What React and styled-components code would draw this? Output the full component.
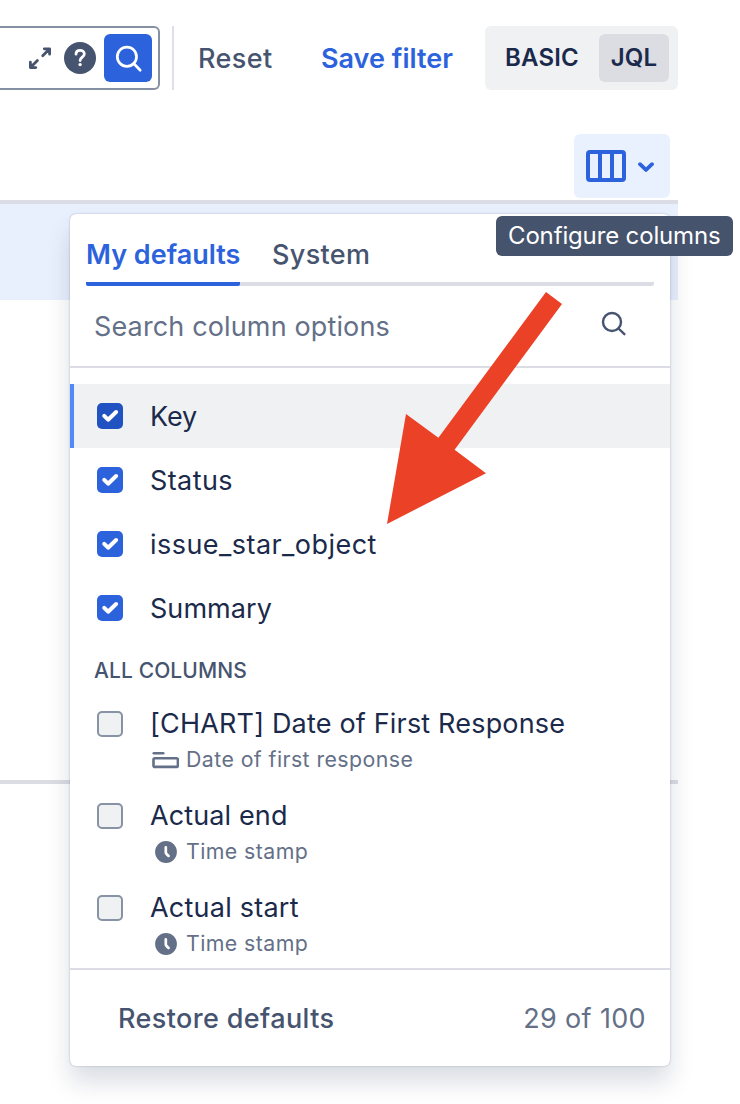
import React from "react";
import styled, { createGlobalStyle } from "styled-components";

const color = {
  text: "#1b2a4b",
  subtle: "#46546f",
  subtlest: "#647087",
  blue: "#2c63dc",
  blueDark: "#2152c1",
  line: "#dcdde4",
  grey: "#f0f1f3",
};

const Global = createGlobalStyle`
  * { box-sizing: border-box; }
  body {
    margin: 0;
    background: #fff;
    font-family: Inter, "Liberation Sans", sans-serif;
    color: ${color.text};
    overflow: hidden;
  }
`;

const Page = styled.main`
  position: relative;
  width: 740px;
  height: 1104px;
  padding-top: 26px;
  overflow: hidden;
`;

const Label = styled.span`
  font-size: ${(p) => p.$size || 27}px;
  font-weight: ${(p) => p.$weight || 430};
  letter-spacing: ${(p) => p.$track || 0}px;
  color: ${(p) => p.$color || color.text};
  line-height: 32px;
  white-space: nowrap;
`;

const Toolbar = styled.header`
  display: flex;
  align-items: center;
  height: 64px;
`;

const QueryBox = styled.div`
  display: flex;
  align-items: center;
  justify-content: flex-end;
  width: 160px;
  height: 64px;
  padding-right: 6px;
  border: 2px solid #8590a2;
  border-left: 0;
  border-radius: 0 6px 6px 0;
`;

const ExpandIcon = styled.svg`
  margin-right: 12px;
`;

const HelpIcon = styled.svg`
  margin-right: 8px;
`;

const SearchButton = styled.button`
  width: 48px;
  height: 48px;
  padding: 0;
  border: 0;
  border-radius: 6px;
  background: ${color.blue};
  svg { display: block; }
`;

const Divider = styled.div`
  width: 2px;
  height: 64px;
  margin: 0 24px 0 12px;
  background: #dfe0e7;
`;

const TextButton = styled.button`
  width: ${(p) => p.$width}px;
  padding: 2px 0 0;
  border: 0;
  background: none;
  font-family: inherit;
  text-align: left;
`;

const Switcher = styled.div`
  display: flex;
  align-items: center;
  width: 193px;
  height: 64px;
  padding: 8px 9px 8px 0;
  border-radius: 6px;
  background: ${color.grey};
`;

const SwitchItem = styled.div`
  display: flex;
  align-items: center;
  justify-content: center;
  width: ${(p) => p.$width}px;
  height: 48px;
  border-radius: 6px;
  background: ${(p) => (p.$active ? "#dcdde2" : "transparent")};
`;

const TableActions = styled.div`
  display: flex;
  justify-content: flex-end;
  width: 670px;
  margin-top: 44px;
`;

const ColumnsButton = styled.button`
  display: flex;
  align-items: center;
  gap: 12px;
  width: 96px;
  height: 64px;
  padding: 0 0 0 12px;
  border: 0;
  border-radius: 6px;
  background: #eaf1fe;
`;

const Table = styled.section`
  width: 678px;
  height: 584px;
  margin-top: 2px;
  border-top: 4px solid ${color.line};
  border-bottom: 4px solid ${color.line};
`;

const TableHead = styled.div`
  height: 96px;
  background: #e9f0fd;
`;

const Popup = styled.section`
  position: absolute;
  left: 70px;
  top: 214px;
  width: 600px;
  height: 852px;
  display: flex;
  flex-direction: column;
  border-radius: 6px;
  background: #fff;
  box-shadow: 0 16px 24px rgba(9, 30, 66, 0.15), 0 0 2px rgba(9, 30, 66, 0.31);
`;

const Tabs = styled.div`
  flex: none;
  display: flex;
  gap: 32px;
  height: 72px;
  margin: 0 16px;
  border-radius: 2px;
  background: linear-gradient(${color.line}, ${color.line}) bottom / 100% 4px no-repeat;
`;

const Tab = styled.div`
  height: 72px;
  width: ${(p) => p.$width}px;
  padding-top: 25px;
  border-radius: 2px;
  background: ${(p) =>
    p.$active ? `linear-gradient(${color.blue}, ${color.blue}) bottom / 100% 4px no-repeat` : "none"};
`;

const SearchRow = styled.div`
  flex: none;
  display: flex;
  align-items: center;
  justify-content: space-between;
  height: 82px;
  padding: 0 40px 0 24px;
  border-bottom: 2px solid ${color.line};
  svg { margin-bottom: 2px; }
  ${Label} { padding-top: 2px; }
`;

const List = styled.div`
  flex: 1;
  min-height: 0;
  overflow: hidden;
  padding-top: 16px;
`;

const CheckedRow = styled.div`
  display: flex;
  align-items: center;
  gap: 27px;
  height: 64px;
  padding-left: ${(p) => (p.$hover ? 23 : 27)}px;
  border-left: ${(p) => (p.$hover ? "4px solid #4f8bf8" : "0")};
  background: ${(p) => (p.$hover ? color.grey : "transparent")};
  ${Label} { padding-top: 2px; }
`;

const Box = styled.span`
  flex: none;
  width: 26px;
  height: 26px;
  border-radius: 5px;
  border: ${(p) => (p.$checked ? "0" : "2px solid #8792a4")};
  background: ${(p) => (p.$checked ? (p.$hover ? color.blueDark : color.blue) : color.grey)};
  svg { display: block; }
`;

const GroupTitle = styled.div`
  height: 54px;
  padding: 15px 0 0 24px;
`;

const OptionRow = styled.div`
  display: flex;
  gap: 27px;
  height: 92px;
  padding: 17px 0 0 27px;
`;

const OptionText = styled.div`
  display: flex;
  flex-direction: column;
  margin-top: -3px;
`;

const Meta = styled.div`
  display: flex;
  align-items: center;
  gap: 7px;
  height: 32px;
  margin-top: 3px;
  svg { margin-top: 2px; }
`;

const Footer = styled.footer`
  flex: none;
  display: flex;
  align-items: center;
  justify-content: space-between;
  height: 98px;
  padding: 2px 24px 0 48px;
  border-top: 2px solid ${color.line};
`;

const Tooltip = styled.div`
  position: absolute;
  left: 496px;
  top: 216px;
  width: 237px;
  height: 40px;
  padding: 4px 0 0 12px;
  border-radius: 6px;
  background: #46536d;
`;

const Pointer = styled.svg`
  position: absolute;
  left: 380px;
  top: 286px;
`;

const CheckBox = ({ checked, hover }) => (
  <Box $checked={checked} $hover={hover}>
    {checked && (
      <svg width="26" height="26" viewBox="0 0 26 26" fill="none" stroke="#fff" strokeWidth="4" strokeLinecap="round" strokeLinejoin="round">
        <path d="M7.2 12.8L11.1 16.7L19.1 9" />
      </svg>
    )}
  </Box>
);

const FieldIcon = () => (
  <svg width="29" height="22" viewBox="0 0 29 22" fill="none" stroke={color.subtlest} strokeWidth="2.6">
    <path d="M3.8 4.3H13.2" strokeLinecap="round" />
    <rect x="3.5" y="9.3" width="24.4" height="8.6" rx="1.5" />
  </svg>
);

const ClockIcon = () => (
  <svg width="29" height="22" viewBox="0 0 29 22" fill="none">
    <circle cx="16" cy="11" r="10.9" fill={color.subtlest} />
    <path d="M15.8 6.3V11.4Q15.8 12.4 18.6 14.9" stroke="#fff" strokeWidth="2.7" strokeLinecap="round" />
  </svg>
);

const checkedColumns = [
  { name: "Key", hover: true, track: -0.1 },
  { name: "Status", track: 0.4 },
  { name: "issue_star_object", track: 0.45 },
  { name: "Summary", track: 0.05 },
];

const otherColumns = [
  { name: "[CHART] Date of First Response", track: 0.18, type: "Date of first response", icon: FieldIcon },
  { name: "Actual end", track: 0.12, type: "Time stamp", icon: ClockIcon },
  { name: "Actual start", track: 0.23, type: "Time stamp", icon: ClockIcon },
];

export default function App() {
  return (
    <Page>
      <Global />
      <Toolbar>
        <QueryBox>
          <ExpandIcon width="24" height="24" viewBox="0 0 24 24" fill="none" stroke={color.subtle} strokeWidth="2.8" strokeLinecap="round" strokeLinejoin="round">
            <path d="M16.3 2.8H21.6V8.2M21 3.4L14.7 9.7M2.4 16.2V21.6H7.8M3 21L9.4 14.6" />
          </ExpandIcon>
          <HelpIcon width="32" height="32" viewBox="0 0 32 32" fill="none">
            <circle cx="16" cy="16" r="16" fill={color.subtle} />
            <path d="M12 12.2C12 9.7 13.8 8.3 16.1 8.3S20.3 9.8 20.3 12.1C20.3 15.2 16.1 15.2 16.1 18.6" stroke="#fff" strokeWidth="2.8" strokeLinecap="round" />
            <circle cx="16.1" cy="22.6" r="1.7" fill="#fff" />
          </HelpIcon>
          <SearchButton>
            <svg width="48" height="48" viewBox="0 0 48 48" fill="none" stroke="#fff" strokeWidth="2.7">
              <circle cx="22.9" cy="22.7" r="9.6" />
              <path d="M29.7 29.5L36.2 36.2" strokeLinecap="round" />
            </svg>
          </SearchButton>
        </QueryBox>
        <Divider />
        <TextButton $width={123}><Label $weight={540} $track={0.4} $color={color.subtle}>Reset</Label></TextButton>
        <TextButton $width={164}><Label $weight={600} $color={color.blue}>Save filter</Label></TextButton>
        <Switcher>
          <SwitchItem $width={114}><Label $size={24} $weight={600} $track={0.2}>BASIC</Label></SwitchItem>
          <SwitchItem $width={70} $active><Label $size={24} $weight={600} $track={0.2}>JQL</Label></SwitchItem>
        </Switcher>
      </Toolbar>

      <TableActions>
        <ColumnsButton>
          <svg width="40" height="32" viewBox="0 0 40 32" fill="none" stroke={color.blue} strokeWidth="4">
            <rect x="2" y="2" width="36" height="28" rx="2" />
            <path d="M14 2V30M26 2V30" />
          </svg>
          <svg width="16" height="14" viewBox="0 0 16 14" fill="none" stroke={color.blue} strokeWidth="3.8" strokeLinecap="round" strokeLinejoin="round">
            <path d="M2 5.2L8 10.9L14 5.2" />
          </svg>
        </ColumnsButton>
      </TableActions>

      <Table><TableHead /></Table>

      <Popup>
        <Tabs>
          <Tab $active $width={154}><Label $weight={560} $color={color.blue}>My defaults</Label></Tab>
          <Tab $width={98}><Label $weight={540} $track={0.33} $color={color.subtle}>System</Label></Tab>
        </Tabs>
        <SearchRow>
          <Label $track={0.14} $color={color.subtlest}>Search column options</Label>
          <svg width="32" height="32" viewBox="0 0 32 32" fill="none" stroke={color.subtle} strokeWidth="2.4">
            <circle cx="14" cy="13" r="9" />
            <path d="M20.5 19.5L26.4 25.2" strokeLinecap="round" />
          </svg>
        </SearchRow>
        <List>
          {checkedColumns.map((c) => (
            <CheckedRow key={c.name} $hover={c.hover}>
              <CheckBox checked hover={c.hover} />
              <Label $track={c.track}>{c.name}</Label>
            </CheckedRow>
          ))}
          <GroupTitle><Label $size={21} $weight={520} $track={0.1} $color={color.subtle}>ALL COLUMNS</Label></GroupTitle>
          {otherColumns.map((c) => (
            <OptionRow key={c.name}>
              <CheckBox />
              <OptionText>
                <Label $track={c.track}>{c.name}</Label>
                <Meta>
                  <c.icon />
                  <Label $size={21.3} $track={0.43} $color={color.subtlest}>{c.type}</Label>
                </Meta>
              </OptionText>
            </OptionRow>
          ))}
        </List>
        <Footer>
          <Label $weight={550} $track={0.38} $color={color.subtle}>Restore defaults</Label>
          <Label $track={0.35} $color={color.subtlest}>29 of 100</Label>
        </Footer>
      </Popup>

      <Tooltip><Label $size={24} $track={-0.15} $color="#fff">Configure columns</Label></Tooltip>

      <Pointer width="190" height="244" viewBox="380 286 190 244">
        <path d="M546 292L562 304L454.6 449.8L486 473.2L387 524L406 414L438.4 437.8Z" fill="#eb4127" />
      </Pointer>
    </Page>
  );
}
